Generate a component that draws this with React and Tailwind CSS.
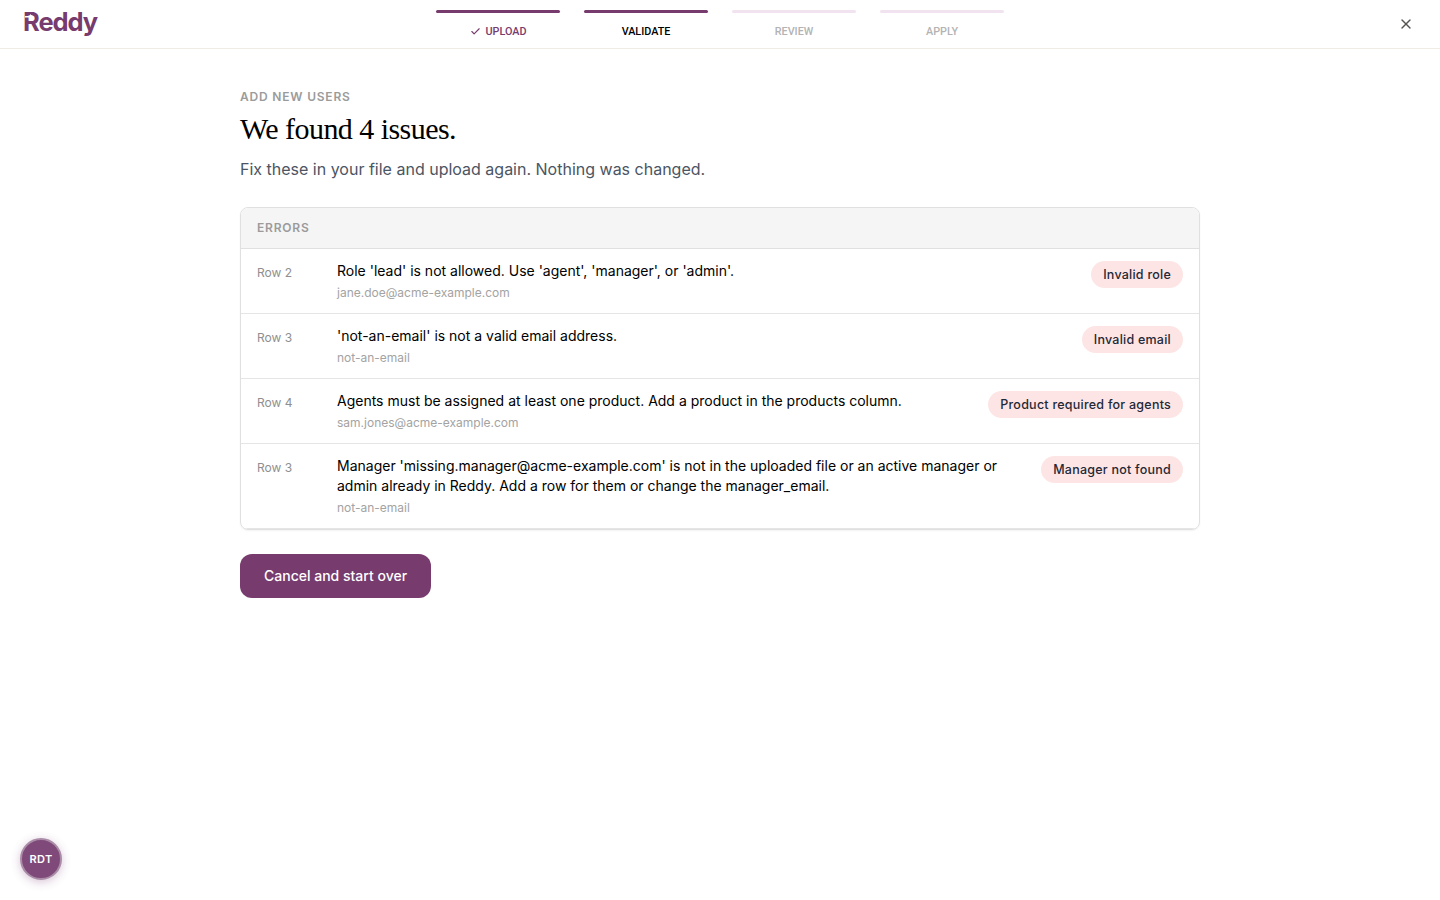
import { X, Check } from 'lucide-react';

const steps = [
  { label: 'UPLOAD', bar: 'bg-[#773b6e]', text: 'text-[#773b6e]', done: true },
  { label: 'VALIDATE', bar: 'bg-[#773b6e]', text: 'text-black' },
  { label: 'REVIEW', bar: 'bg-[#f1e4f0]', text: 'text-[#b3b3b3]' },
  { label: 'APPLY', bar: 'bg-[#f1e4f0]', text: 'text-[#b3b3b3]' },
];

const errors = [
  { row: 'Row 2', msg: "Role 'lead' is not allowed. Use 'agent', 'manager', or 'admin'.", sub: 'jane.doe@acme-example.com', tag: 'Invalid role' },
  { row: 'Row 3', msg: "'not-an-email' is not a valid email address.", sub: 'not-an-email', tag: 'Invalid email' },
  { row: 'Row 4', msg: 'Agents must be assigned at least one product. Add a product in the products column.', sub: 'sam.jones@acme-example.com', tag: 'Product required for agents' },
  { row: 'Row 3', msg: "Manager 'missing.manager@acme-example.com' is not in the uploaded file or an active manager or admin already in Reddy. Add a row for them or change the manager_email.", sub: 'not-an-email', tag: 'Manager not found' },
];

function Header() {
  return (
    <header className="h-[49px] border-b border-[#f0ece4] flex items-start justify-between pl-[23px] pr-[26px] relative">
      <div className="relative mt-[6px] text-[25.5px] leading-[32px] font-bold tracking-[-1.05px] text-[#773b6e]">
        Reddy
        {/* little arrow cut into the R */}
        <svg className="absolute left-[2px] top-[7px]" width="9" height="8" viewBox="0 0 9 8">
          <path d="M0 3h5V1l3 2.5L5 6V4.5H0z" fill="#fff" />
        </svg>
      </div>
      <div className="absolute left-[436px] top-[10px] flex gap-6">
        {steps.map((s) => (
          <div key={s.label} className="w-[124px] flex flex-col items-center">
            <div className={`h-[3px] w-full rounded-full ${s.bar}`} />
            <div className={`mt-[12px] h-[13px] flex items-center gap-[5px] text-[10.8px] leading-[13px] font-medium font-['Roboto',sans-serif] ${s.text}`}>
              {s.done && <Check className="w-[11px] h-[11px]" strokeWidth={2.5} />}
              {s.label}
            </div>
          </div>
        ))}
      </div>
      <button className="mt-[16px] text-[#57534e]" aria-label="Close">
        <X className="w-[16px] h-[16px]" strokeWidth={2} />
      </button>
    </header>
  );
}

function ErrorRow({ row, msg, sub, tag }) {
  return (
    <div className="flex items-start px-4 pt-3 pb-[10px] border-b border-[#e5e5e5]">
      <div className="w-20 shrink-0 text-xs leading-5 text-[#8f8f8f] pt-[2px]">{row}</div>
      <div className="flex-1 min-w-0">
        <div className="text-sm leading-5 text-black">{msg}</div>
        <div className="text-xs leading-5 mt-[2px] text-[#a3a3a3]">{sub}</div>
      </div>
      <span className="ml-10 shrink-0 h-[27px] px-3 rounded-full bg-[#fee5e5] text-[12.5px] leading-[27px] font-medium tracking-[0.24px] text-[#1f2937]">{tag}</span>
    </div>
  );
}

export default function App() {
  return (
    <div className="min-h-[900px] bg-white font-['Inter',sans-serif] relative">
      <Header />
      <main className="w-[960px] mx-auto pt-[40px]">
        <div className="text-xs leading-4 font-semibold tracking-[0.8px] text-[#9b9b9b]">ADD NEW USERS</div>
        <h1 className="mt-[6px] text-[30px] leading-[36px] font-normal tracking-[-0.55px] text-black font-['Liberation_Serif',serif]">We found 4 issues.</h1>
        <p className="mt-[10px] text-base leading-6 text-[#4b5563]">Fix these in your file and upload again. Nothing was changed.</p>
        <div className="mt-[26px] border border-[#e0e0e0] rounded-lg overflow-hidden shadow-[0_1px_2px_rgba(0,0,0,0.05)]">
          <div className="h-[41px] px-4 bg-[#f5f5f5] border-b border-[#e0e0e0] flex items-center text-xs font-semibold tracking-[0.8px] text-[#9b9b9b]">ERRORS</div>
          {errors.map((e, i) => (
            <ErrorRow key={i} {...e} />
          ))}
        </div>
        <button className="mt-[24px] h-[44px] px-6 rounded-xl bg-[#773b6e] text-sm font-medium text-white">Cancel and start over</button>
      </main>
      <div className="absolute left-5 top-[838px] w-[42px] h-[42px] rounded-full bg-[#7f4a79] border-2 border-[#ab8ca8] shadow-[0_2px_10px_rgba(122,59,115,0.3)] flex items-center justify-center text-[11px] font-semibold tracking-[0.4px] text-white">RDT</div>
    </div>
  );
}
